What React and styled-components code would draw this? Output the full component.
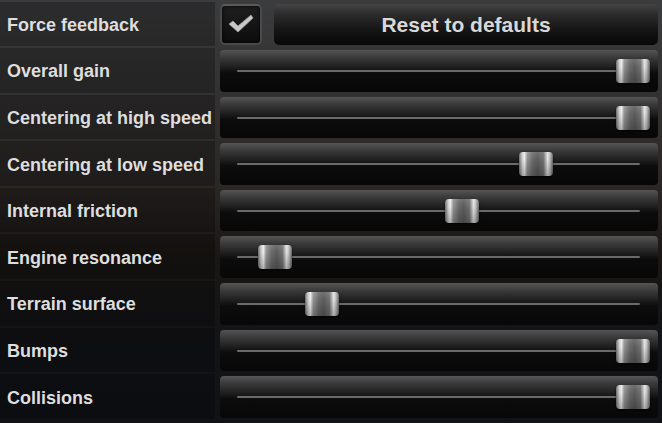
import React from 'react'
import styled, { createGlobalStyle } from 'styled-components'

const GlobalStyle = createGlobalStyle`
  html, body {
    margin: 0;
    padding: 0;
    height: 100%;
  }
  body {
    background: linear-gradient(180deg, #3b3c3e 0%, #2a2624 45%, #1a1714 60%, #131418 80%, #111216 100%);
    font-family: "Liberation Sans", Arial, sans-serif;
    overflow: hidden;
  }
`

const Settings = styled.div`
  display: grid;
  grid-template-rows: repeat(9, 44.6px);
  row-gap: 2px;
  padding-top: 1.5px;
  width: 662px;
  height: 423px;
  box-sizing: border-box;
`

const Row = styled.div`
  display: flex;
  align-items: stretch;
  gap: 5px;
  padding-right: 4px;
`

const Label = styled.div`
  width: 215px;
  flex: none;
  display: flex;
  align-items: center;
  padding: 3px 0 0 7px;
  box-sizing: border-box;
  background: rgba(0, 0, 0, 0.26);
  color: #dedede;
  font-weight: bold;
  font-size: 18px;
  white-space: nowrap;
`

const Controls = styled.div`
  flex: 1;
  display: flex;
  gap: 12px;
  padding: 2px 0 1px 0;
`

const CheckBox = styled.div`
  width: 42px;
  flex: none;
  border-radius: 5px;
  box-sizing: border-box;
  border: 2px solid #4a4a4a;
  border-top-color: #5a5a5a;
  background: linear-gradient(180deg, #1e1e1e 0%, #0d0d0d 100%);
  box-shadow: inset 0 0 4px rgba(0, 0, 0, 0.8);
  display: flex;
  align-items: center;
  justify-content: center;
`

const ResetButton = styled.div`
  flex: 1;
  border-radius: 5px;
  background: linear-gradient(180deg, #444 0%, #2c2c2c 25%, #161616 60%, #080808 100%);
  display: flex;
  align-items: center;
  justify-content: center;
  padding-top: 1px;
  color: #d8d8d8;
  font-weight: bold;
  font-size: 21px;
`

const SliderPanel = styled.div`
  flex: 1;
  position: relative;
  border-radius: 4px;
  background: linear-gradient(180deg, #555 0%, #3a3a3a 18%, #222 38%, #0c0c0c 55%, #070707 100%);
`

const Track = styled.div`
  position: absolute;
  left: 17px;
  right: 18px;
  top: 20px;
  height: 2px;
  background: #6a6a6a;
  border-radius: 1px;
`

const Thumb = styled.div`
  position: absolute;
  top: 9px;
  width: 34px;
  height: 24px;
  border-radius: 4px;
  background:
    linear-gradient(180deg, rgba(255,255,255,0.12) 0%, rgba(0,0,0,0) 30%, rgba(0,0,0,0.25) 100%),
    linear-gradient(90deg, #6c6c6c 0%, #cfcfcf 10%, #ececec 16%, #949494 24%, #6a6a6a 40%, #5c5c5c 55%, #727272 72%, #e2e2e2 84%, #c2c2c2 90%, #646464 100%);
  box-shadow: 0 1px 2px rgba(0, 0, 0, 0.7);
`

function CheckMark() {
  return (
    <svg width="28" height="22" viewBox="0 0 28 22">
      <path
        d="M2 11 L6 8 L11 13 L24 2 L26 5 L11 19 Z"
        fill="#c9c9c9"
        stroke="#9a9a9a"
        strokeWidth="0.8"
        strokeLinejoin="round"
      />
    </svg>
  )
}

const sliders = [
  { name: 'Overall gain', value: 1 },
  { name: 'Centering at high speed', value: 1 },
  { name: 'Centering at low speed', value: 0.744 },
  { name: 'Internal friction', value: 0.549 },
  { name: 'Engine resonance', value: 0.055 },
  { name: 'Terrain surface', value: 0.179 },
  { name: 'Bumps', value: 1 },
  { name: 'Collisions', value: 1 },
]

// thumb centre runs from 34px to 413px inside the panel
function Slider({ value }) {
  const centre = 34 + value * 379
  return (
    <SliderPanel>
      <Track />
      <Thumb style={{ left: centre - 17 }} />
    </SliderPanel>
  )
}

export default function App() {
  return (
    <>
      <GlobalStyle />
      <Settings>
        <Row>
          <Label>Force feedback</Label>
          <Controls>
            <CheckBox>
              <CheckMark />
            </CheckBox>
            <ResetButton>Reset to defaults</ResetButton>
          </Controls>
        </Row>
        {sliders.map(item => (
          <Row key={item.name}>
            <Label>{item.name}</Label>
            <Controls>
              <Slider value={item.value} />
            </Controls>
          </Row>
        ))}
      </Settings>
    </>
  )
}
